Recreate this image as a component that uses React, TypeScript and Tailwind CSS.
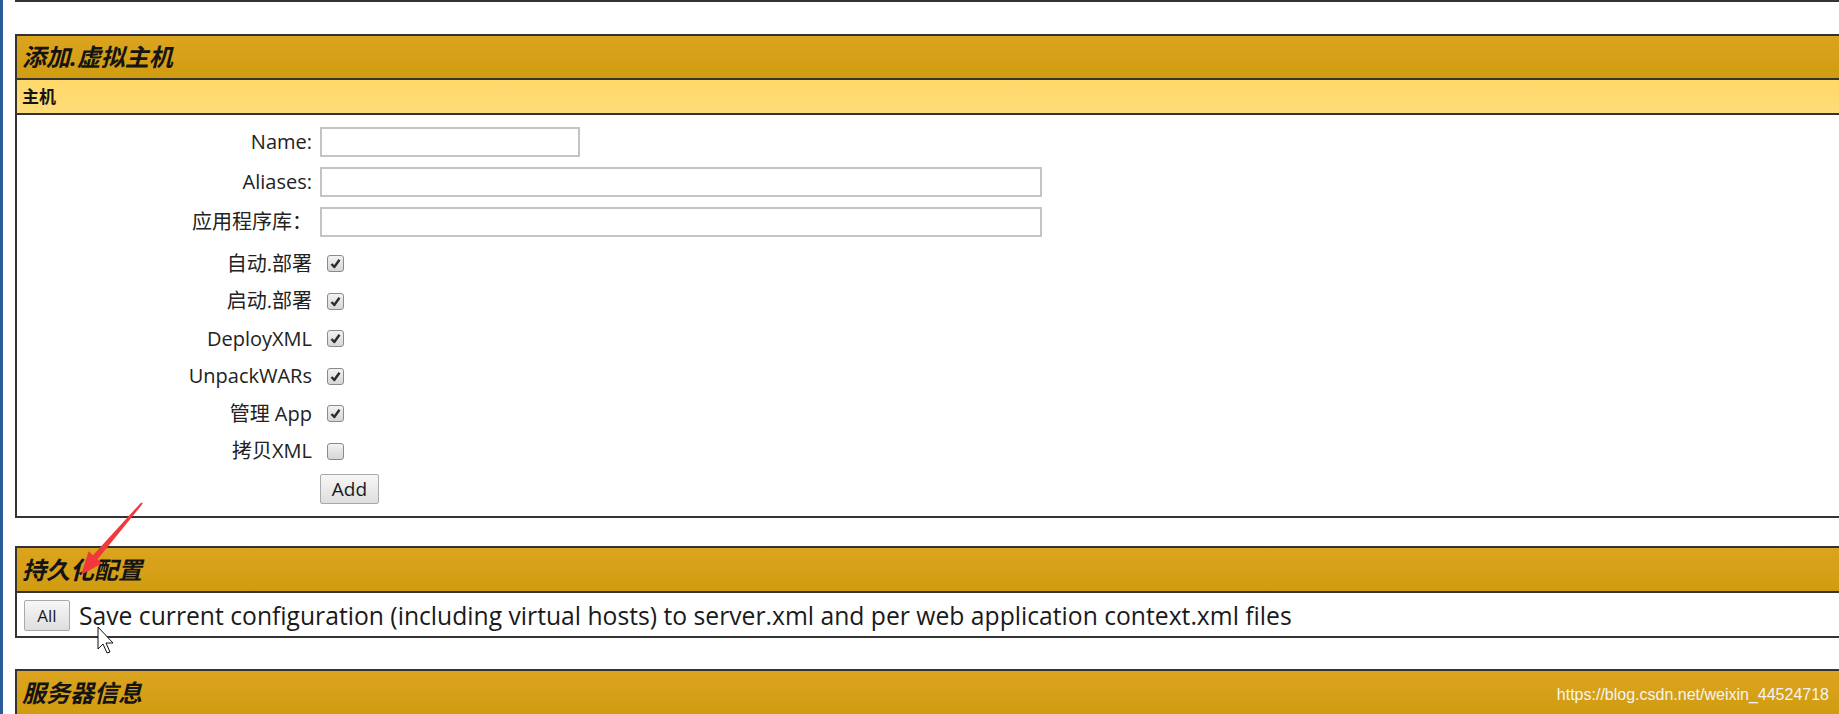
import React from "react";

const font = { fontFamily: '"Open Sans", "Noto Sans CJK SC", sans-serif' };

const CheckBox = ({ checked }: { checked: boolean }) => (
  <span className="ml-[7px] flex h-[17px] w-[17px] items-center justify-center rounded-[3px] border border-[#8a8a8a] bg-gradient-to-b from-[#f2f2f2] to-[#d6d6d6]">
    {checked && (
      <svg width="11" height="11" viewBox="0 0 11 11">
        <path d="M1.5 6 L4.3 9 L9.5 1.8" fill="none" stroke="#2b2b2b" strokeWidth="2.4" strokeLinejoin="round" />
      </svg>
    )}
  </span>
);

const Button = ({ label, className }: { label: string; className: string }) => (
  <button
    className={`flex items-center justify-center rounded-[2px] border border-[#a9a9a9] bg-gradient-to-b from-[#f7f7f7] to-[#dedede] text-[#1a1a1a] ${className}`}
  >
    {label}
  </button>
);

const TextRow = ({ label, wide }: { label: string; wide?: boolean }) => (
  <div className="flex h-[40px] items-center">
    <span className="w-[295px] text-right text-[20px] text-[#222]">{label}</span>
    <span
      className={`ml-[8px] h-[30px] border-2 border-[#c4c4c4] bg-white ${wide ? "w-[722px]" : "w-[260px]"}`}
    />
  </div>
);

const CheckRow = ({ label, checked }: { label: string; checked: boolean }) => (
  <div className="flex h-[37.5px] items-center">
    <span className="w-[295px] text-right text-[20px] text-[#222]">{label}</span>
    <span className="ml-[8px] flex">
      <CheckBox checked={checked} />
    </span>
  </div>
);

const Header = ({ title, h }: { title: string; h: string }) => (
  <div
    className={`flex w-full items-center bg-gradient-to-b from-[#dca41f] to-[#d09c0f] pl-[5px] text-[24px] font-bold italic text-[#141414] ${h}`}
  >
    {title}
  </div>
);

export default function App() {
  return (
    <div className="relative flex h-[714px] w-[1839px] overflow-hidden bg-white" style={font}>
      <div className="w-[3px] shrink-0 bg-[#2a5c9c]" />
      <div className="flex w-[1900px] shrink-0 flex-col pl-[12px]">
        {/* remnant of the table above */}
        <div className="flex h-[4px] border-b-2 border-l-2 border-[#333]">
          <div className="w-[488px] border-r border-[#555]" />
          <div className="w-[244px] border-r border-[#555]" />
          <div className="flex-1" />
        </div>

        {/* add virtual host */}
        <div className="mt-[32px] flex flex-col border-2 border-r-0 border-[#333]">
          <Header title="添加.虚拟主机" h="h-[42px]" />
          <div className="flex h-[37px] items-center border-y-2 border-[#333] bg-gradient-to-b from-[#ffd869] to-[#ffdc78] pl-[5px] text-[17px] font-bold text-[#141414]">
            主机
          </div>
          <div className="flex h-[401px] flex-col pt-[7px]">
            <TextRow label="Name:" />
            <TextRow label="Aliases:" wide />
            <TextRow label="应用程序库：" wide />
            <div className="mt-[3px] flex flex-col">
              <CheckRow label="自动.部署" checked />
              <CheckRow label="启动.部署" checked />
              <CheckRow label="DeployXML" checked />
              <CheckRow label="UnpackWARs" checked />
              <CheckRow label="管理 App" checked />
              <CheckRow label="拷贝XML" checked={false} />
            </div>
            <div className="mt-[4px] flex pl-[303px]">
              <Button label="Add" className="h-[30px] w-[59px] text-[19px]" />
            </div>
          </div>
        </div>

        {/* persistence */}
        <div className="mt-[28px] flex flex-col border-2 border-r-0 border-[#333]">
          <Header title="持久化配置" h="h-[43px]" />
          <div className="flex h-[45px] items-center border-t-2 border-[#333] pl-[7px] pt-[2px]">
            <Button label="All" className="h-[31px] w-[46px] text-[17px]" />
            <span className="ml-[9px] text-[24.7px] text-[#1a1a1a]">
              Save current configuration (including virtual hosts) to server.xml and per web application context.xml files
            </span>
          </div>
        </div>

        {/* server info */}
        <div className="mt-[31px] flex flex-col border-2 border-b-0 border-r-0 border-[#333]">
          <Header title="服务器信息" h="h-[43px]" />
        </div>
      </div>

      {/* watermark */}
      <span
        className="absolute right-[10px] top-[683px] whitespace-nowrap text-[16px] text-[#f4f4f4]"
        style={{ fontFamily: '"Liberation Sans", sans-serif' }}
      >
        https://blog.csdn.net/weixin_44524718
      </span>

      {/* red annotation arrow and mouse pointer */}
      <svg className="absolute left-0 top-0" width="200" height="660" viewBox="0 0 200 660">
        <path
          d="M141.2 502.4 L142.8 503.6 L97.6 559.3 L102 563.3 L81 575 L88.6 551.3 L93 555.3 Z"
          fill="#f2383c"
        />
        <path
          d="M98 627 L98 649 L103 644 L107 653 L110 652 L106 643 L113 643 Z"
          fill="#fff"
          stroke="#111"
          strokeWidth="1"
          strokeLinejoin="round"
        />
      </svg>
    </div>
  );
}
